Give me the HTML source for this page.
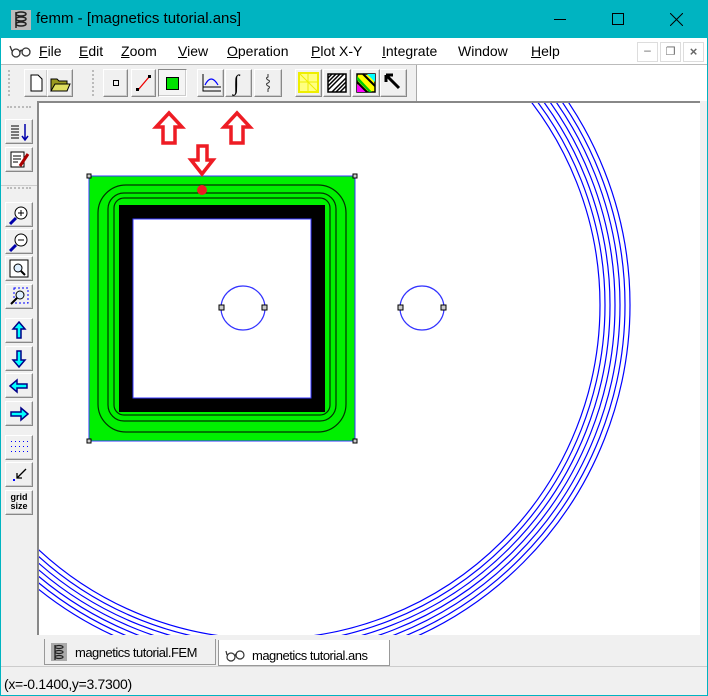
<!DOCTYPE html>
<html><head><meta charset="utf-8"><style>
*{margin:0;padding:0;box-sizing:border-box}
body{width:708px;height:696px;overflow:hidden;background:#f0f0f0;font-family:"Liberation Sans",sans-serif;position:relative}
.abs{position:absolute}
#title{left:0;top:0;width:708px;height:38px;background:#00b4c1}
#title .t{left:36px;top:10px;font-size:15px;color:#000}
#frameL{left:0;top:38px;width:1px;height:658px;background:#00b4c1}
#frameR{right:0;top:38px;width:1px;height:658px;background:#00b4c1}
#frameB{left:0;bottom:0;width:708px;height:1px;background:#00b4c1}
#menu{left:1px;top:38px;width:706px;height:26px;background:#fff}
.mi{position:absolute;top:5px;font-size:14px;color:#000}
.mi u{text-decoration:underline}
#tb{left:1px;top:64px;width:706px;height:37px;background:#fff;border-top:1px solid #bbb}
#tbg{left:1px;top:65px;width:416px;height:36px;background:#f0f0f0;border-right:1px solid #aaa}
.btn{position:absolute;background:#f0f0f0;border:1px solid;border-color:#fff #888 #888 #fff;box-shadow:inset -1px -1px 0 #ccc}
.btn.p{border-color:#888 #fff #fff #888;background:#f4f4f4}
.grip{position:absolute;width:3px;border-left:2px dotted #bbb}
#left{left:1px;top:101px;width:36px;height:565px;background:#f0f0f0}
#canvas{left:37px;top:101px;width:663px;height:534px;background:#fff;border-top:2px solid #888;border-left:2px solid #888;overflow:hidden}
#tabs{left:37px;top:635px;width:663px;height:31px;background:#f0f0f0}
.tab{position:absolute;font-size:13px;letter-spacing:-0.5px;color:#000}
#status{left:4px;top:676px;font-size:14px;letter-spacing:-0.3px}
</style></head><body>
<div class="abs" id="title">
<svg class="abs" style="left:11px;top:10px" width="20" height="20"><rect width="20" height="20" fill="#bbb"/><g fill="none" stroke="#222" stroke-width="1.5"><ellipse cx="10" cy="4" rx="5" ry="2"/><ellipse cx="10" cy="9" rx="5" ry="2"/><ellipse cx="10" cy="14" rx="5" ry="2"/><line x1="5" y1="2" x2="5" y2="18"/></g></svg>
<div class="abs t">femm - [magnetics tutorial.ans]</div>
<div class="abs" style="left:554px;top:19px;width:12px;height:1px;background:#000"></div>
<div class="abs" style="left:612px;top:13px;width:12px;height:12px;border:1px solid #000"></div>
<svg class="abs" style="left:670px;top:13px" width="13" height="13"><path d="M0 0L13 13M13 0L0 13" stroke="#000" stroke-width="1"/></svg>
</div>
<div class="abs" id="frameL"></div><div class="abs" id="frameR"></div><div class="abs" id="frameB"></div>
<div class="abs" id="menu">
<svg class="abs" style="left:8px;top:5px" width="24" height="16"><g fill="none" stroke="#333" stroke-width="1.3"><circle cx="7" cy="10" r="4"/><circle cx="17" cy="9" r="4"/><path d="M11 9Q12 6 13 8M3 8L1 3"/></g></svg>
<div class="mi" style="left:38px"><u>F</u>ile</div>
<div class="mi" style="left:78px"><u>E</u>dit</div>
<div class="mi" style="left:120px"><u>Z</u>oom</div>
<div class="mi" style="left:177px"><u>V</u>iew</div>
<div class="mi" style="left:226px"><u>O</u>peration</div>
<div class="mi" style="left:310px"><u>P</u>lot X-Y</div>
<div class="mi" style="left:381px"><u>I</u>ntegrate</div>
<div class="mi" style="left:457px">Window</div>
<div class="mi" style="left:530px"><u>H</u>elp</div>
<div class="abs" style="left:636px;top:4px;width:21px;height:20px;border:1px solid #ddd;font-size:12px;color:#666;text-align:center">&#8211;</div>
<div class="abs" style="left:659px;top:4px;width:21px;height:20px;border:1px solid #ddd;font-size:11px;color:#666;text-align:center;line-height:18px">&#10064;</div>
<div class="abs" style="left:682px;top:4px;width:21px;height:20px;border:1px solid #ddd;font-size:13px;color:#666;text-align:center;line-height:18px;font-weight:bold">&#215;</div>
</div>
<div class="abs" id="tb"></div>
<div class="abs" id="tbg">
<div class="grip" style="left:7px;top:5px;height:26px"></div>
<div class="grip" style="left:91px;top:5px;height:26px"></div>
<div class="btn" style="left:23px;top:4px;width:24px;height:28px"><svg width="22" height="26"><path d="M6 5h7l4 4v12H6z" fill="#fff" stroke="#000"/></svg></div>
<div class="btn" style="left:46px;top:4px;width:26px;height:28px"><svg width="24" height="26"><path d="M3 9h6l2 2h8v10H3z" fill="#9a9a20" stroke="#000"/><path d="M3 21l4-7h15l-3 7z" fill="#dede60" stroke="#000"/></svg></div>
<div class="btn" style="left:102px;top:4px;width:25px;height:28px"><div class="abs" style="left:9px;top:10px;width:6px;height:6px;border:1px solid #000"></div></div>
<div class="btn" style="left:130px;top:4px;width:25px;height:28px"><svg width="23" height="26"><path d="M6 20L17 7" stroke="#e00" stroke-width="1.3"/><rect x="4" y="18" width="3" height="3"/><rect x="16" y="5" width="3" height="3"/></svg></div>
<div class="btn p" style="left:157px;top:4px;width:29px;height:28px"><div class="abs" style="left:7px;top:7px;width:13px;height:13px;background:#00e000;border:1px solid #000"></div></div>
<div class="btn" style="left:196px;top:4px;width:27px;height:28px"><svg width="25" height="26"><path d="M5 4v17h18M5 17h18" stroke="#000" fill="none"/><path d="M7 15Q13 3 20 15" stroke="#00f" fill="none" stroke-width="1.2"/></svg></div>
<div class="btn" style="left:224px;top:4px;width:27px;height:28px"><div class="abs" style="left:7px;top:0;font-size:22px;font-weight:bold;font-style:italic;font-family:'Liberation Serif',serif">&#8747;</div></div>
<div class="btn" style="left:253px;top:4px;width:28px;height:28px"><svg width="26" height="26"><path d="M13 4v3q-3 1 0 3q3 1 0 3q-3 1 0 3q3 1 0 3v3" stroke="#333" fill="none"/></svg></div>
<div class="btn" style="left:294px;top:4px;width:27px;height:28px"><svg width="25" height="26"><rect x="3" y="3" width="19" height="19" fill="#ffff80" stroke="#ee0" stroke-width="2"/><path d="M3 12h19M12 3v19M3 3l19 19" stroke="#ee0"/></svg></div>
<div class="btn" style="left:322px;top:4px;width:28px;height:28px"><svg width="26" height="26"><rect x="4" y="4" width="18" height="18" fill="#fff" stroke="#000" stroke-width="1.5"/><path d="M4 8l4-4M4 12l8-8M4 16l12-12M4 20l16-16M8 22l14-14M12 22l10-10M16 22l6-6" stroke="#000" stroke-width="1.5"/></svg></div>
<div class="btn" style="left:351px;top:4px;width:28px;height:28px"><svg width="26" height="26"><rect x="4" y="4" width="18" height="18" fill="#ff0" stroke="#000" stroke-width="1.5"/><path d="M4 14l10 8h-10z" fill="#f0f"/><path d="M14 4h8v8z" fill="#0ff"/><path d="M4 10l12 12h3L4 6z" fill="#0c0"/><path d="M10 4l12 12" stroke="#000" stroke-width="2"/><path d="M4 12l10 10" stroke="#000" stroke-width="2"/></svg></div>
<div class="btn" style="left:379px;top:4px;width:27px;height:28px"><svg width="25" height="26"><path d="M5 5l13 13M5 5v7M5 5h7" stroke="#000" stroke-width="3" fill="none"/></svg></div>
</div>
<div class="abs" id="left">
<div class="abs" style="left:6px;top:5px;width:24px;border-top:2px dotted #bbb"></div>
<div class="abs" style="left:6px;top:86px;width:24px;border-top:2px dotted #bbb"></div>
<div class="abs" style="left:0;top:84px;width:36px;border-top:1px solid #ccc"></div>
<div class="btn" style="left:4px;top:18px;width:28px;height:25px"><svg width="26" height="23"><path d="M5 6h8M5 9h8M5 12h8M5 15h8M5 18h8" stroke="#000"/><path d="M19 4v15M16 16l3 4 3-4" stroke="#00a" stroke-width="1.5" fill="none"/></svg></div>
<div class="btn" style="left:4px;top:46px;width:28px;height:25px"><svg width="26" height="23"><rect x="5" y="4" width="13" height="15" fill="#fff" stroke="#000"/><path d="M7 8h8M7 11h8M7 14h5" stroke="#000"/><path d="M14 18l8-12" stroke="#a00" stroke-width="3"/></svg></div>
<div class="btn" style="left:4px;top:101px;width:28px;height:25px"><svg width="26" height="23"><circle cx="15" cy="10" r="6" fill="#fff" stroke="#000"/><path d="M12 10h6M15 7v6" stroke="#000"/><path d="M10 15l-6 6" stroke="#00a" stroke-width="3"/></svg></div>
<div class="btn" style="left:4px;top:128px;width:28px;height:25px"><svg width="26" height="23"><circle cx="15" cy="10" r="6" fill="#fff" stroke="#000"/><path d="M12 10h6" stroke="#000"/><path d="M10 15l-6 6" stroke="#00a" stroke-width="3"/></svg></div>
<div class="btn" style="left:4px;top:155px;width:28px;height:25px"><svg width="26" height="23"><rect x="4" y="3" width="18" height="17" fill="#fff" stroke="#000"/><circle cx="12" cy="11" r="4" fill="#def" stroke="#000"/><path d="M15 14l4 4" stroke="#000" stroke-width="2"/></svg></div>
<div class="btn" style="left:4px;top:183px;width:28px;height:25px"><svg width="26" height="23"><rect x="8" y="3" width="14" height="15" fill="none" stroke="#00f" stroke-dasharray="2 2"/><circle cx="14" cy="10" r="4" fill="#def" stroke="#000"/><path d="M11 13l-6 6" stroke="#000" stroke-width="2"/></svg></div>
<div class="btn" style="left:4px;top:217px;width:28px;height:25px"><svg width="26" height="23"><path d="M13 3l6 7h-4v9h-4v-9h-4z" fill="#0ff" stroke="#008" stroke-width="1.5"/></svg></div>
<div class="btn" style="left:4px;top:245px;width:28px;height:25px"><svg width="26" height="23"><path d="M13 20l6-7h-4v-9h-4v9h-4z" fill="#0ff" stroke="#008" stroke-width="1.5"/></svg></div>
<div class="btn" style="left:4px;top:272px;width:28px;height:25px"><svg width="26" height="23"><path d="M4 12l7-6v4h10v4h-10v4z" fill="#0ff" stroke="#008" stroke-width="1.5"/></svg></div>
<div class="btn" style="left:4px;top:300px;width:28px;height:25px"><svg width="26" height="23"><path d="M22 12l-7-6v4h-10v4h10v4z" fill="#0ff" stroke="#008" stroke-width="1.5"/></svg></div>
<div class="btn" style="left:4px;top:334px;width:28px;height:25px"><svg width="26" height="23"><g fill="#00f"><rect x="5" y="5" width="1" height="1"/><rect x="9" y="5" width="1" height="1"/><rect x="13" y="5" width="1" height="1"/><rect x="17" y="5" width="1" height="1"/><rect x="21" y="5" width="1" height="1"/><rect x="5" y="10" width="1" height="1"/><rect x="9" y="10" width="1" height="1"/><rect x="13" y="10" width="1" height="1"/><rect x="17" y="10" width="1" height="1"/><rect x="21" y="10" width="1" height="1"/><rect x="5" y="15" width="1" height="1"/><rect x="9" y="15" width="1" height="1"/><rect x="13" y="15" width="1" height="1"/><rect x="17" y="15" width="1" height="1"/><rect x="21" y="15" width="1" height="1"/></g></svg></div>
<div class="btn" style="left:4px;top:361px;width:28px;height:25px"><svg width="26" height="23"><rect x="7" y="16" width="2" height="2" fill="#00f"/><path d="M20 6l-9 9M11 10v5h5" stroke="#000" fill="none" stroke-width="1.3"/></svg></div>
<div class="btn" style="left:4px;top:389px;width:28px;height:25px;font-size:9px;font-weight:bold;text-align:center;line-height:9px;padding-top:2px">grid<br>size</div>
</div>
<div class="abs" id="canvas">
<svg width="663" height="534" style="position:absolute;left:-2px;top:-2px" viewBox="37 101 663 534">
<g fill="none" stroke="#0000ff" stroke-width="1.2">
<circle cx="266" cy="305" r="334"/><circle cx="266" cy="305" r="339"/><circle cx="266" cy="305" r="344"/><circle cx="266" cy="305" r="349"/><circle cx="266" cy="305" r="354"/><circle cx="266" cy="305" r="359"/><circle cx="266" cy="305" r="364"/>
</g>
<rect x="89" y="176" width="266" height="265" fill="#00f000" stroke="#3333ff"/>
<g fill="none" stroke="#003300" stroke-width="1.2">
<rect x="98" y="185" width="248" height="247" rx="28"/>
<rect x="108" y="193" width="228" height="228" rx="16"/>
<rect x="114" y="198" width="216" height="217" rx="10"/>
</g>
<rect x="126" y="212" width="192" height="193" fill="none" stroke="#000" stroke-width="14"/>
<rect x="133" y="219" width="178" height="179" fill="#fff" stroke="#3333ff"/>
<g fill="none" stroke="#3333ff" stroke-width="1.2"><circle cx="243" cy="308" r="22"/><circle cx="422" cy="308" r="22"/></g>
<g fill="#ccc" stroke="#000" stroke-width="1"><rect x="87" y="174" width="4" height="4"/><rect x="353" y="174" width="4" height="4"/><rect x="87" y="439" width="4" height="4"/><rect x="353" y="439" width="4" height="4"/><rect x="219" y="305" width="5" height="5"/><rect x="262" y="305" width="5" height="5"/><rect x="398" y="305" width="5" height="5"/><rect x="441" y="305" width="5" height="5"/></g>
<g fill="#fff" stroke="#ee1c24" stroke-width="3.5">
<path d="M169 113l-13 14h7v16h12v-16h7z"/>
<path d="M237 113l-13 14h7v16h12v-16h7z"/>
<path d="M198 146h9v14h6l-11 14l-11-14h7z"/>
</g>
<circle cx="202" cy="190" r="5" fill="#ee1c24"/>
</svg>
</div>
<div class="abs" id="tabs">
<div class="abs" style="left:7px;top:4px;width:172px;height:26px;border:1px solid #999;border-top:none;background:#f0f0f0"></div>
<svg class="abs" style="left:14px;top:8px" width="16" height="18"><rect width="16" height="18" fill="#aaa"/><g fill="none" stroke="#222" stroke-width="1.3"><ellipse cx="8" cy="4" rx="4" ry="1.5"/><ellipse cx="8" cy="9" rx="4" ry="1.5"/><ellipse cx="8" cy="14" rx="4" ry="1.5"/><line x1="4" y1="2" x2="4" y2="17"/></g></svg>
<div class="tab" style="left:38px;top:10px">magnetics tutorial.FEM</div>
<div class="abs" style="left:181px;top:5px;width:172px;height:27px;border:1px solid #999;border-top:none;background:#fff;border-bottom:2px solid #999"></div>
<svg class="abs" style="left:188px;top:12px" width="22" height="16"><g fill="none" stroke="#333" stroke-width="1.2"><circle cx="6" cy="10" r="4"/><circle cx="15" cy="8" r="4"/><path d="M10 9Q11 6 11.5 7.5M2 8L1 4"/></g></svg>
<div class="tab" style="left:215px;top:13px">magnetics tutorial.ans</div>
</div>
<div class="abs" style="left:1px;top:666px;width:706px;height:1px;background:#ccc"></div>
<div class="abs" id="status">(x=-0.1400,y=3.7300)</div>
</body></html>
